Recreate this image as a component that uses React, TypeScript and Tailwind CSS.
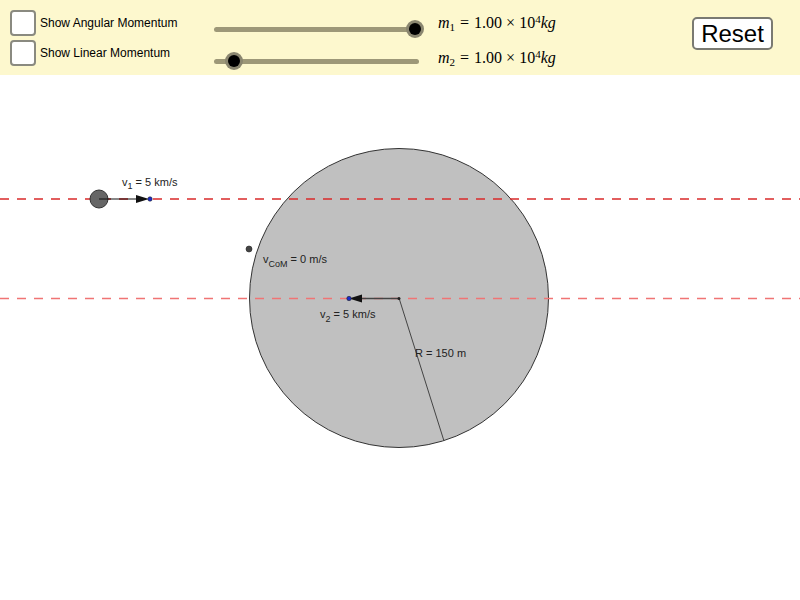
import * as React from 'react'

const sans = { fontFamily: '"Liberation Sans", Arial, sans-serif' }
const serif = { fontFamily: '"Liberation Serif", "DejaVu Serif", serif' }

function Checkbox({ label }: { label: string }) {
  return (
    <label className="flex items-center gap-[4px] text-[12px] text-black" style={sans}>
      <span className="block h-[26px] w-[26px] rounded-[4px] border-2 border-[#8a8a80] bg-white" />
      <span>{label}</span>
    </label>
  )
}

function Slider({ pos }: { pos: number }) {
  return (
    <div className="relative h-[20px] w-[205px]">
      <div className="absolute left-0 right-0 top-[8px] h-[5px] rounded-full bg-[#9d9878]" />
      <div
        className="absolute top-[1px] h-[18px] w-[18px] rounded-full bg-[#8a8670] p-[3px]"
        style={{ left: pos - 9 }}
      >
        <div className="h-full w-full rounded-full bg-black" />
      </div>
    </div>
  )
}

function MassLabel({ n }: { n: number }) {
  return (
    <div className="flex items-baseline text-[16px] leading-none text-black" style={serif}>
      <i>m</i>
      <sub className="text-[11px]">{n}</sub>
      <span className="ml-[5px]">=</span>
      <span className="ml-[5px]">1.00</span>
      <span className="mx-[4px]">×</span>
      <span>10</span>
      <sup className="text-[11px]">4</sup>
      <i>kg</i>
    </div>
  )
}

export default function App() {
  return (
    <div className="h-[600px] w-[800px] overflow-hidden bg-white">
      {/* control panel */}
      <div className="flex h-[75px] w-full bg-[#fdf8ce]">
        <div className="flex w-[214px] flex-col gap-[4px] pl-[10px] pt-[10px]">
          <Checkbox label="Show Angular Momentum" />
          <Checkbox label="Show Linear Momentum" />
        </div>
        <div className="flex w-[224px] flex-col gap-[12px] pt-[19px]">
          <Slider pos={201} />
          <Slider pos={20} />
        </div>
        <div className="flex w-[254px] flex-col gap-[19px] pt-[15px]">
          <MassLabel n={1} />
          <MassLabel n={2} />
        </div>
        <div className="pt-[17px]">
          <button
            className="h-[33px] w-[81px] rounded-[5px] border-2 border-[#7a7a72] bg-white text-[24px] leading-none text-black"
            style={sans}
          >
            Reset
          </button>
        </div>
      </div>

      {/* drawing canvas */}
      <svg width="800" height="525" viewBox="0 75 800 525" className="block">
        <circle cx="399" cy="298" r="149.5" fill="#c0c0c0" stroke="#333" strokeWidth="1" />
        <line x1="0" y1="199" x2="800" y2="199" stroke="#d92a2a" strokeWidth="1.3" strokeDasharray="9 8" />
        <line x1="0" y1="298.5" x2="800" y2="298.5" stroke="#f07474" strokeWidth="1.6" strokeDasharray="9 8" />
        <line x1="399" y1="298" x2="444" y2="441" stroke="#444" strokeWidth="1" />

        {/* body 1 */}
        <circle cx="99" cy="199" r="9" fill="#666" stroke="#333" strokeWidth="1" />
        <line x1="99" y1="199" x2="140" y2="199" stroke="#111" strokeWidth="1" />
        <polygon points="136,195 149,199 136,203" fill="#111" />
        <circle cx="150" cy="199" r="2.2" fill="#1a2ccc" stroke="#222" strokeWidth="0.6" />
        <text x="122" y="186" fontSize="11" fill="#222" style={sans}>
          v<tspan fontSize="9" dy="3">1</tspan>
          <tspan dy="-3"> = 5 km/s</tspan>
        </text>

        {/* centre of mass */}
        <circle cx="249" cy="249" r="3" fill="#444" stroke="#222" strokeWidth="0.6" />
        <text x="263" y="263" fontSize="11" fill="#222" style={sans}>
          v<tspan fontSize="9" dy="4">CoM</tspan>
          <tspan dy="-4"> = 0 m/s</tspan>
        </text>

        {/* body 2 velocity */}
        <line x1="399" y1="298.5" x2="358" y2="298.5" stroke="#444" strokeWidth="1.5" />
        <polygon points="362,294.5 349,298.5 362,302.5" fill="#111" />
        <circle cx="399" cy="298.5" r="1.5" fill="#222" />
        <circle cx="349" cy="298.5" r="2.2" fill="#1a2ccc" stroke="#222" strokeWidth="0.6" />
        <text x="320" y="318" fontSize="11" fill="#222" style={sans}>
          v<tspan fontSize="9" dy="4">2</tspan>
          <tspan dy="-4"> = 5 km/s</tspan>
        </text>

        <text x="415" y="357" fontSize="11" fill="#222" style={sans}>
          R = 150 m
        </text>
      </svg>
    </div>
  )
}
